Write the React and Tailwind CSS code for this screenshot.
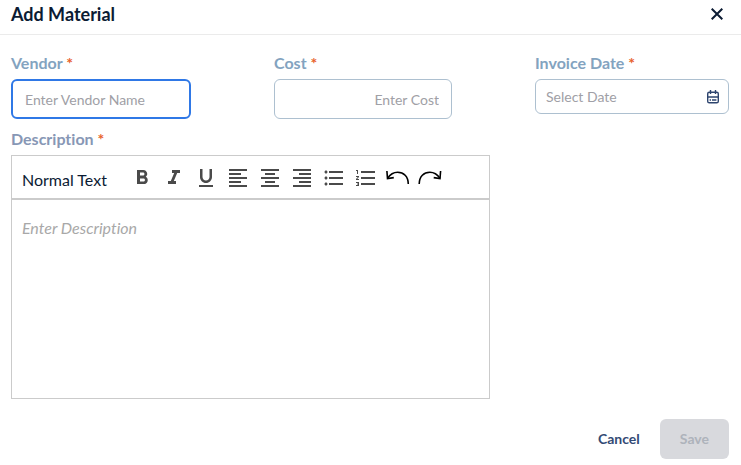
import {
  MdFormatAlignCenter,
  MdFormatAlignLeft,
  MdFormatAlignRight,
  MdFormatBold,
  MdFormatItalic,
  MdFormatListBulleted,
  MdFormatListNumbered,
  MdFormatUnderlined,
} from "react-icons/md";

function CloseIcon() {
  return (
    <svg width="12" height="12" viewBox="0 0 12 12" fill="none" stroke="currentColor" strokeWidth="2" aria-hidden="true">
      <path d="M0.7 0.7 11.3 11.3M11.3 0.7 0.7 11.3" />
    </svg>
  );
}

function CalendarIcon() {
  return (
    <svg width="14" height="14" viewBox="0 0 14 14" fill="none" stroke="currentColor" strokeWidth="1.4" aria-hidden="true">
      <rect x="1.7" y="2.2" width="10.6" height="10.6" rx="1.6" />
      <path d="M1.7 7h10.6M4.5 0v4M9.5 0v4" />
      <path d="M3.6 10h1.4M6 10h4.4" />
    </svg>
  );
}

function UndoIcon() {
  return (
    <svg width="24" height="24" viewBox="0 0 24 24" fill="none" stroke="currentColor" strokeWidth="1.6" aria-hidden="true">
      <path d="M0.9 5L1.5 12.6L7.8 11.6" />
      <path d="M1.6 12.3C4.2 8.4 7.6 6.3 11.6 6.3C17.6 6.3 22.2 10.4 22.3 18" />
    </svg>
  );
}

function RedoIcon() {
  return (
    <svg width="24" height="24" viewBox="0 0 24 24" fill="none" stroke="currentColor" strokeWidth="1.6" aria-hidden="true">
      <path d="M22.6 5L22 12.6L15.7 11.6" />
      <path d="M21.9 12.3C19.3 8.4 15.9 6.3 11.9 6.3C5.9 6.3 1.3 10.4 1.2 18" />
    </svg>
  );
}

const tools = [
  { name: "Bold", Icon: MdFormatBold },
  { name: "Italic", Icon: MdFormatItalic },
  { name: "Underline", Icon: MdFormatUnderlined },
  { name: "Align left", Icon: MdFormatAlignLeft },
  { name: "Align center", Icon: MdFormatAlignCenter },
  { name: "Align right", Icon: MdFormatAlignRight },
  { name: "Bulleted list", Icon: MdFormatListBulleted },
  { name: "Numbered list", Icon: MdFormatListNumbered },
];

function Label({ htmlFor, children, className = "text-[#83a3bf]" }) {
  return (
    <label htmlFor={htmlFor} className={`block text-base leading-6 font-bold ${className}`}>
      {children} <span className="text-[#e8622c]">*</span>
    </label>
  );
}

export default function App() {
  return (
    <form className="bg-white font-['Lato',sans-serif] text-[#0b1b33] [font-variant-ligatures:none]">
      <header className="flex items-center justify-between border-b border-[#ebebeb] pt-0.5 pr-[18px] pb-2 pl-[11px]">
        <h1 className="text-lg leading-6 font-bold">Add Material</h1>
        <button type="button" aria-label="Close">
          <CloseIcon />
        </button>
      </header>

      <main className="pt-4 pr-3 pl-[11px]">
        <div className="flex items-start justify-between">
          <div className="w-[180px]">
            <Label htmlFor="vendor">Vendor</Label>
            <input
              id="vendor"
              placeholder="Enter Vendor Name"
              className="mt-1 block h-10 w-full rounded-md border-2 border-[#2f78e6] px-3 text-sm outline-none placeholder:text-[#a0a0a6]"
            />
          </div>
          <div className="w-[178px]">
            <Label htmlFor="cost">Cost</Label>
            <input
              id="cost"
              placeholder="Enter Cost"
              className="mt-1 block h-10 w-full rounded-md border border-[#adc0d0] px-3 text-right text-sm outline-none placeholder:text-[#a0a0a6]"
            />
          </div>
          <div className="w-[194px]">
            <Label htmlFor="date">Invoice Date</Label>
            <div className="mt-1 flex h-[35px] items-center rounded-md border border-[#adc0d0] px-2">
              <input
                id="date"
                placeholder="Select Date"
                className="min-w-0 flex-1 px-0.5 text-sm outline-none placeholder:text-[#a0a0a6]"
              />
              <button type="button" aria-label="Open calendar" className="text-[#2d446e]">
                <CalendarIcon />
              </button>
            </div>
          </div>
        </div>

        <div className="mt-2 w-2/3">
          <Label htmlFor="description" className="text-[#8797b5]">
            Description
          </Label>
          <div className="mt-1 border border-[#cbcbcb]">
            <div className="flex items-start border-b-2 border-[#cbcbcb] px-2.5 pt-2.5 pb-1.5">
              <select aria-label="Text style" className="w-27 appearance-none pt-0.5 text-base leading-6 outline-none">
                <option>Normal Text</option>
              </select>
              <div className="flex gap-2 text-[#4a4a4a]">
                {tools.map(({ name, Icon }) => (
                  <button key={name} type="button" aria-label={name}>
                    <Icon size={24} />
                  </button>
                ))}
                <button type="button" aria-label="Undo" className="text-black">
                  <UndoIcon />
                </button>
                <button type="button" aria-label="Redo" className="text-black">
                  <RedoIcon />
                </button>
              </div>
            </div>
            <textarea
              id="description"
              placeholder="Enter Description"
              className="block h-[198px] w-full resize-none px-2.5 py-4 text-base leading-6 outline-none placeholder:text-[#a8a8a8] placeholder:italic"
            />
          </div>
        </div>
      </main>

      <footer className="flex justify-end gap-5 px-3 pt-5 pb-1.5">
        <button type="button" className="text-sm font-bold text-[#334a75]">
          Cancel
        </button>
        <button type="submit" disabled className="h-10 rounded-md bg-[#d8d9dd] px-5 text-sm font-bold text-[#aeb3bb]">
          Save
        </button>
      </footer>
    </form>
  );
}
